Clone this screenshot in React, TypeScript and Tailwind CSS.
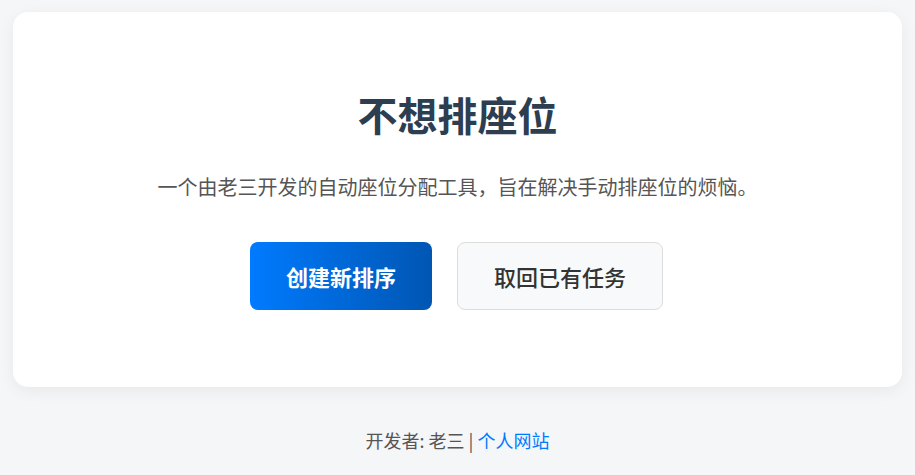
const FONT = '"Noto Sans CJK SC", "Noto Sans", sans-serif';

export default function App() {
  return (
    <div
      className="min-h-[475px] bg-[#f5f6f8] px-[13px] pt-3 pb-6"
      style={{ fontFamily: FONT }}
    >
      <main className="rounded-[15px] bg-white px-10 pt-[78px] pb-[77px] text-center shadow-[0_4px_16px_rgba(0,0,0,0.06)]">
        <h1 className="text-[40px] font-bold leading-[48px] text-[#2c3e50]">不想排座位</h1>
        <p className="mt-[34px] text-[20px] leading-[30px] text-[#555]">
          一个由老三开发的自动座位分配工具，旨在解决手动排座位的烦恼。
        </p>
        <div className="mt-[40px] flex justify-center gap-[25px] pr-[2px]">
          <button className="h-[68px] w-[182px] rounded-lg bg-gradient-to-r from-[#007bff] to-[#0056b3] text-[22px] font-semibold text-white">
            创建新排序
          </button>
          <button className="h-[68px] w-[206px] rounded-lg border border-[#ddd] bg-[#f8f9fa] text-[22px] font-medium text-[#333]">
            取回已有任务
          </button>
        </div>
      </main>
      <footer className="mt-[40px] text-center text-[18px] leading-[27px] text-[#555]">
        开发者: 老三 | <a href="#" className="text-[#007bff]">个人网站</a>
      </footer>
    </div>
  );
}
